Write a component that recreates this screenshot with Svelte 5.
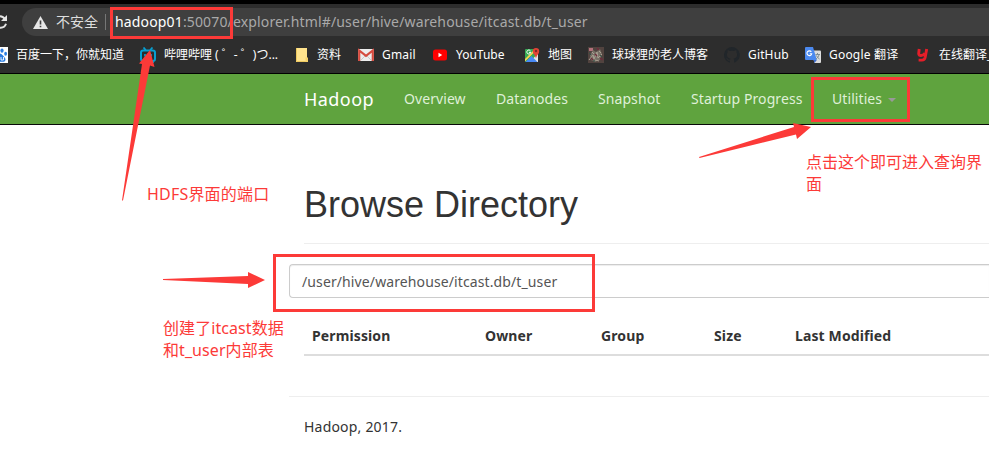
<script>
  const bookmarks = [
    { icon: 'baidu', label: '百度一下，你就知道' },
    { icon: 'bili', label: '哔哩哔哩 ( ゜- ゜)つ...' },
    { icon: 'folder', label: '资料' },
    { icon: 'gmail', label: 'Gmail' },
    { icon: 'youtube', label: 'YouTube' },
    { icon: 'maps', label: '地图' },
    { icon: 'avatar', label: '球球狸的老人博客' },
    { icon: 'github', label: 'GitHub' },
    { icon: 'translate', label: 'Google 翻译' },
    { icon: 'youdao', label: '在线翻译_' },
  ];
  const nav = ['Overview', 'Datanodes', 'Snapshot', 'Startup Progress'];
  const columns = ['Permission', 'Owner', 'Group', 'Size', 'Last Modified'];
</script>

<div class="screen">
  <header class="chrome">
    <div class="address-row">
      <svg class="reload" width="8" height="16" viewBox="0 0 8 16">
        <path d="M0 2.3A5.8 5.8 0 0 1 5 5.300M0 13.700A5.800 5.800 0 0 0 6 9.800" fill="none" stroke="#e4e4e4" stroke-width="2" />
        <path d="M7 1V7H1z" fill="#e4e4e4" />
      </svg>
      <div class="address">
        <svg width="15" height="13" viewBox="0 0 15 13">
          <path d="M7.500 0L15 13H0z" fill="#e6e6e6" />
          <path d="M6.700 4.500h1.600v4H6.700zM6.700 9.700h1.600v1.600H6.700z" fill="#3f3f3f" />
        </svg>
        <span class="unsafe">不安全</span>
        <i class="divider"></i>
        <span class="url"><b>hadoop01</b><span class="port">:50070</span><span class="path">/explorer.html#/user/hive/warehouse/itcast.db/t_user</span></span>
      </div>
    </div>
    <div class="bookmarks">
      {#each bookmarks as item}
        <div class="bookmark {item.icon}">
          <svg width="16" height="16" viewBox="0 0 16 16">
            {#if item.icon === 'baidu'}
              <rect width="16" height="16" fill="#fff" />
              <g fill="#2a7de1">
                <ellipse cx="10" cy="3.600" rx="1.600" ry="2.200" />
                <ellipse cx="13.600" cy="6.700" rx="1.400" ry="2" />
                <ellipse cx="6" cy="3.800" rx="1.600" ry="2.200" />
                <path d="M8 6.600c2 0 3 2.400 4.600 3.800 2 2 .5 4.600-1.800 4.400-1.700-.2-3.900-.2-5.600 0-3 .2-3.400-3-1.700-4.500C5.200 8.900 6 6.600 8 6.600z" />
              </g>
              <path d="M9 10v3h2.500v-3" fill="none" stroke="#fff" stroke-width=".9" />
            {:else if item.icon === 'bili'}
              <rect x="1" y="3.500" width="14" height="10.500" rx="2.200" fill="none" stroke="#079fd2" stroke-width="2" />
              <path d="M3.500.5l2.300 2.600M12.500.5l-2.300 2.600" stroke="#079fd2" stroke-width="1.700" />
              <path d="M5 7v2.500M11 7v2.500M3 14v2M13 14v2" stroke="#079fd2" stroke-width="1.700" />
            {:else if item.icon === 'folder'}
              <path d="M4 1h11v14H4z" fill="#ffe38d" />
              <path d="M4.500 1v13.500H15" fill="none" stroke="#eec95f" />
              <path d="M13.500 10.500H16V15h-2.500z" fill="#f6d26b" />
            {:else if item.icon === 'gmail'}
              <rect y="2" width="16" height="12" rx="1" fill="#ededed" />
              <path d="M2.500 13.500L8 8l5.500 5.500" fill="none" stroke="#c9c9c9" />
              <path d="M1.200 14V3.500L8 8.800l6.800-5.300V14" fill="none" stroke="#d54b3f" stroke-width="2.200" />
            {:else if item.icon === 'youtube'}
              <rect x="1" y="2.500" width="14" height="11" rx="2.500" fill="#f00" />
              <path d="M6.500 5.800v4.400L10.200 8z" fill="#fff" />
            {:else if item.icon === 'maps'}
              <rect x="1" y="2" width="13" height="13" rx="1" fill="#35a853" />
              <path d="M5.500 15L14 6.500V15z" fill="#e5e5e5" />
              <path d="M1.500 15L7.500 9l6 6z" fill="#4889f4" />
              <path d="M1 12L11 2h2.500L1 14.500z" fill="#f8d251" />
              <path d="M6.500 3.900a2 2 0 1 0 .3 1.500H5" fill="none" stroke="#fff" />
              <path d="M8.800 4.200a3.200 3.200 0 1 1 6.400 0c0 2.600-2.200 3.300-3.200 7-1-3.700-3.200-4.400-3.200-7z" fill="#e34335" />
              <circle cx="12" cy="4" r="1.200" fill="#832b28" />
            {:else if item.icon === 'avatar'}
              <rect width="16" height="16" fill="#51433f" />
              <path d="M1 1h4v3H1z" fill="#b4717b" />
              <path d="M2 8l3-5 3 2 4-3 2 5-2 6-5 2-4-2z" fill="#777066" />
              <path d="M1 13l4-5 1 4 3-7 1 6 4-4M4 5l2 2M11 4l2 2M7 13l4 1" stroke="#aaa092" fill="none" />
              <path d="M9 1l2 2M3 11l2 2M12 11l3 2M7 7l2 2" stroke="#702b3c" stroke-width="1.400" />
              <path d="M1 6l2 2M12 8l2 2M5 14h2" stroke="#345348" />
            {:else if item.icon === 'github'}
              <path fill="#21262a" d="M8 0a8 8 0 0 0-2.500 15.600c.4.100.5-.2.500-.4v-1.500c-2.200.5-2.700-1-2.700-1-.4-.9-.9-1.200-.9-1.200-.7-.5.100-.5.100-.5.800.1 1.200.8 1.200.8.700 1.200 1.900.9 2.300.7.100-.5.300-.9.500-1.100-1.800-.2-3.600-.9-3.600-4 0-.9.300-1.600.8-2.100-.1-.2-.4-1 .1-2.100 0 0 .7-.2 2.200.8a7.700 7.700 0 0 1 4 0c1.500-1 2.200-.8 2.200-.8.500 1.100.2 1.900.1 2.100.5.600.8 1.300.8 2.100 0 3.100-1.900 3.800-3.700 4 .3.200.6.700.6 1.500v2.200c0 .2.100.5.600.4A8 8 0 0 0 8 0z" />
            {:else if item.icon === 'translate'}
              <path d="M6 3.500h9a1 1 0 0 1 1 1V15a1 1 0 0 1-1 1H9.500z" fill="#dcdcdc" />
              <path d="M1 0h7l3.800 13H1a1 1 0 0 1-1-1V1a1 1 0 0 1 1-1z" fill="#4b89ef" />
              <path d="M8.600 13h3.200l-2.300 3z" fill="#3868cb" />
              <path d="M6.300 4.800a2.400 2.400 0 1 0 .4 2H4.800" fill="none" stroke="#fff" stroke-width="1.100" />
              <path d="M10.500 7.500H15M12.500 6v1.500M14 7.500c-.3 2-1.500 3.500-3 4.500M11.500 8.500c.5 1.500 1.500 2.500 3 3.500" fill="none" stroke="#77878e" stroke-width=".9" />
            {:else}
              <path d="M4.200 2L3.700 6.600Q3.700 8.700 6 8.500Q8.800 8.300 9.800 6M11.700 2L10.200 10.300Q9.600 13.100 7 13.100H3.600" fill="none" stroke="#e51e29" stroke-width="2.900" />
            {/if}
          </svg>
          <span>{item.label}</span>
        </div>
      {/each}
    </div>
  </header>

  <nav class="navbar">
    <a class="brand" href="#top">Hadoop</a>
    {#each nav as label}<a href="#top">{label}</a>{/each}
    <a class="utilities" href="#top">Utilities <i class="caret"></i></a>
  </nav>

  <main>
    <h1>Browse Directory</h1>
    <div class="directory">/user/hive/warehouse/itcast.db/t_user</div>
    <div class="table-head">
      {#each columns as label}<strong>{label}</strong>{/each}
    </div>
    <footer>Hadoop, 2017.</footer>
  </main>

  <svg class="marks" width="989" height="471" viewBox="0 0 989 471">
    <g fill="none" stroke="#fc3a38" stroke-width="3">
      <rect x="111.500" y="8.500" width="120" height="29" />
      <rect x="812.500" y="78.500" width="96" height="42" />
      <rect x="274.500" y="255.500" width="319" height="55" />
    </g>
    <g fill="#fc3a38">
      <path d="M150 50L154.500 67L150 65.500L123 200.500L122 200.500L142 64L139 63.500z" />
      <path d="M811 127L797 139L796 134.500L699.500 158L699 157L794 127L793 123z" />
      <path d="M265 280L248 288V284L163 280V279L248 276V272z" />
    </g>
  </svg>
  <p class="note port-note">HDFS界面的端口</p>
  <p class="note query-note">点击这个即可进入查询界<br />面</p>
  <p class="note table-note">创建了itcast数据<br />和t_user内部表</p>
</div>

<style>
  :global(body) { margin: 0; background: #fff; }
  .screen {
    position: relative;
    width: 989px;
    height: 471px;
    overflow: hidden;
    color: #333;
    background: #fff;
    font: 14px/20px "Noto Sans", "Noto Sans CJK SC", sans-serif;
  }
  .chrome {
    box-sizing: border-box;
    height: 74px;
    padding-top: 4px;
    border-top: 4px solid #000;
    border-bottom: 1px solid #000;
    background: #2d2d2d;
  }
  .address-row { display: flex; align-items: center; gap: 14px; height: 28px; }
  .reload { flex: none; }
  .address {
    flex: 1;
    display: flex;
    align-items: center;
    height: 28px;
    padding-left: 11px;
    border-radius: 14px 0 0 14px;
    background: #3f3f3f;
    color: #dedede;
    white-space: nowrap;
  }
  .unsafe { margin-left: 8px; width: 43px; }
  .divider { width: 1px; height: 16px; margin: 0 9px 0 6px; background: #777; }
  .url { color: #a9a9a9; letter-spacing: 0.15px; }
  .url b { font-weight: 400; color: #fff; }
  .bookmarks {
    display: grid;
    grid-template-columns: 148px 152px 66px 74px 92px 64px 136px 81px 110px 90px;
    margin-left: -8px;
    height: 37px;
    color: #fff;
    font-size: 12px;
    white-space: nowrap;
  }
  .bookmark { display: flex; align-items: center; gap: 8px; }
  .bookmark svg { flex: none; }
  .folder span { padding-left: 1px; }
  .gmail span, .github span { letter-spacing: 0.15px; }
  .translate span { letter-spacing: 0.2px; }
  .navbar {
    box-sizing: border-box;
    display: grid;
    grid-template-columns: 100px 92px 102px 93px 141px 94px;
    height: 51px;
    padding-left: 289px;
    border-bottom: 1px solid #080808;
    background: #5fa33e;
  }
  .navbar a { padding: 15px 0 15px 15px; color: #dff0d8; letter-spacing: 0.08px; text-decoration: none; white-space: nowrap; }
  .navbar .brand { font-size: 18px; color: #fff; letter-spacing: 0.45px; }
  .caret {
    display: inline-block;
    margin-left: 2px;
    vertical-align: middle;
    border: 4px solid transparent;
    border-top-color: #999;
    border-bottom: 0;
  }
  main { padding-left: 289px; }
  h1 {
    height: 40px;
    margin: 0 0 20px 15px;
    padding: 60px 0 18px;
    border-bottom: 1px solid #eee;
    font: 400 36px/40px "Liberation Sans", Arial, sans-serif;
  }
  .directory {
    box-sizing: border-box;
    height: 34px;
    padding: 7px 12px 5px;
    border: 1px solid #ccc;
    border-right: 0;
    border-radius: 4px 0 0 4px;
    box-shadow: inset 0 1px 1px #00000013;
    color: #555;
    letter-spacing: 0.11px;
  }
  .table-head {
    display: grid;
    grid-template-columns: 173px 116px 113px 81px 1fr;
    margin: 20px 0 0 15px;
    padding: 8px 0 8px 8px;
    border-bottom: 2px solid #ddd;
    letter-spacing: 0.12px;
  }
  footer { margin-top: 40px; padding: 20px 15px; border-top: 1px solid #eee; letter-spacing: 0.2px; }
  .marks { position: absolute; left: 0; top: 0; }
  .note { position: absolute; margin: 0; color: #fc3a38; font-size: 16px; line-height: 22px; white-space: nowrap; }
  .port-note { left: 147px; top: 183px; letter-spacing: 0.2px; }
  .query-note { left: 806px; top: 151px; }
  .table-note { left: 163px; top: 317px; letter-spacing: 0.08px; }
</style>
